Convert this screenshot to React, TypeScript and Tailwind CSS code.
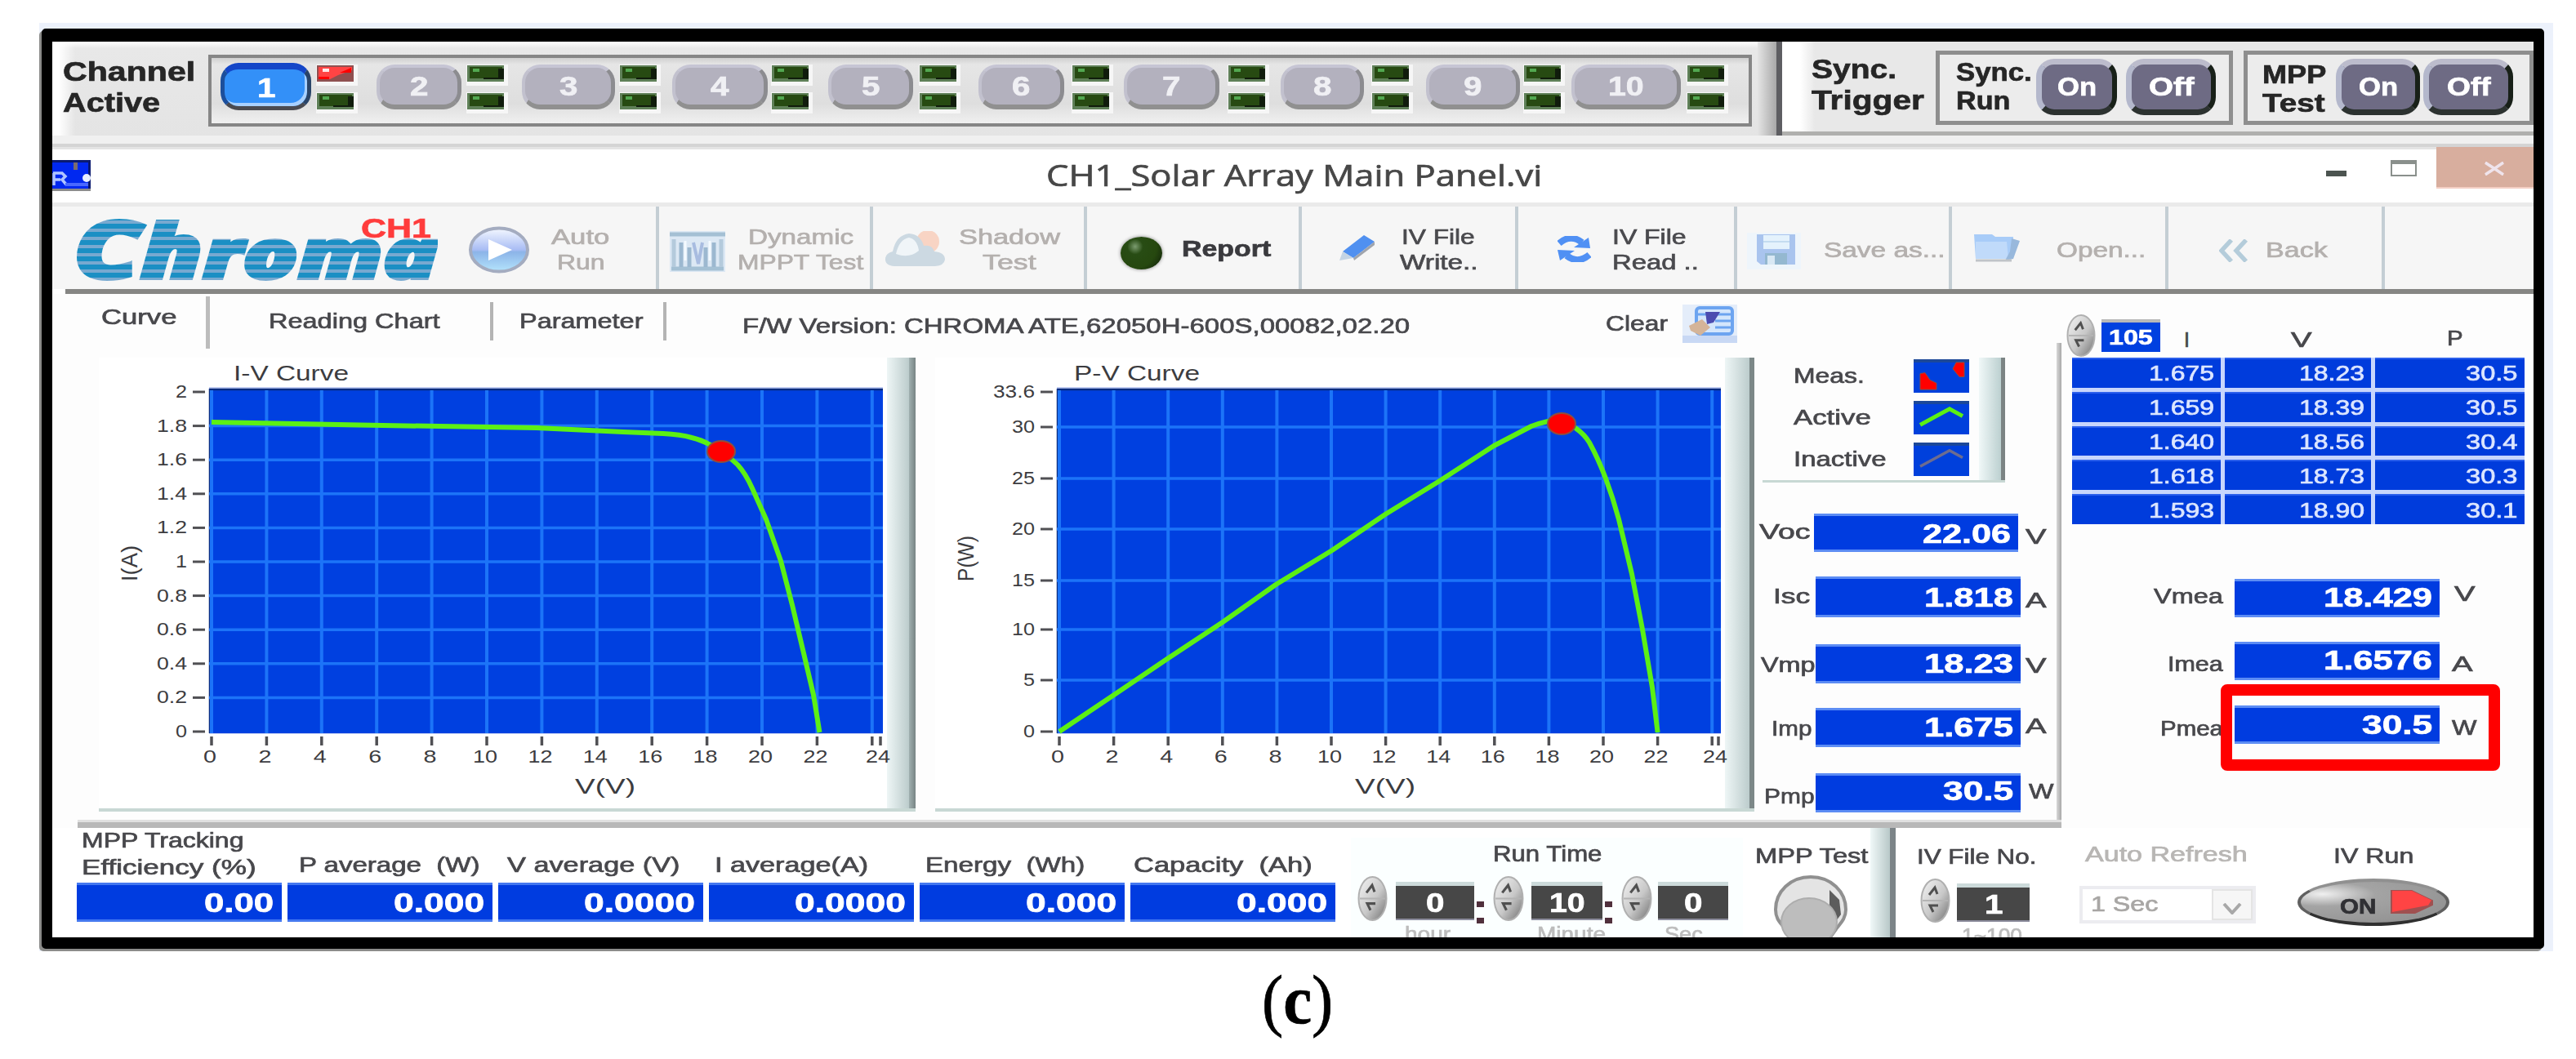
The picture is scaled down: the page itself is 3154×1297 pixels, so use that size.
import React, { useLayoutEffect, useRef, useState } from 'react'

type TextProps = {
  w: number,
  className?: string,
  children: React.ReactNode
}

// single line of text stretched to the given width
const T = ({ w, className = 'text-[26px]', children }: TextProps) => {
  const ref = useRef<HTMLSpanElement>(null)
  const [scale, setScale] = useState(1)
  useLayoutEffect(() => {
    if (ref.current) setScale(w / ref.current.offsetWidth)
  }, [w])
  return (
    <div className={`shrink-0 leading-none whitespace-pre ${className}`} style={{ width: w }}>
      <span ref={ref} className="inline-block origin-left" style={{ transform: `scaleX(${scale})` }}>{children}</span>
    </div>
  )
}

const channels = [
  { n: '1', btn: 'ml-[11px] w-[111px]', led: 'ml-[7px]' },
  { n: '2', btn: 'ml-[28px] w-[104px]', led: 'ml-[7px]' },
  { n: '3', btn: 'ml-[22px] w-[114px]', led: 'ml-[6px]' },
  { n: '4', btn: 'ml-[19px] w-[117px]', led: 'ml-[5px]' },
  { n: '5', btn: 'ml-[24px] w-[104px]', led: 'ml-[8px]' },
  { n: '6', btn: 'ml-[27px] w-[105px]', led: 'ml-[10px]' },
  { n: '7', btn: 'ml-[18px] w-[117px]', led: 'ml-[11px]' },
  { n: '8', btn: 'ml-[19px] w-[102px]', led: 'ml-[10px]' },
  { n: '9', btn: 'ml-[21px] w-[115px]', led: 'ml-[5px]' },
  { n: '10', btn: 'ml-[13px] w-[134px]', led: 'ml-[8px]' },
]

const Led = ({ on = false }: { on?: boolean }) => (
  <svg viewBox="0 0 45 20" preserveAspectRatio="none" className="w-[45px] h-[20px] shadow-[2px_2px_0_3px_#f6f6f6]">
    <rect width="45" height="20" fill={on ? '#8f5050' : '#5f8058'} />
    <path d={on ? 'M2 2H43V6L26 12L16 17H2Z' : 'M3 2H43V16H3Z'} fill={on ? '#ff4444' : '#274a12'} />
    {on ? <path d="M28 9L42 3V9ZM2 14H15V17H2Z" fill="#ff0000" /> : <path d="M45 4V17H20V15H38V4Z" fill="#101c0c" />}
    <rect x="7" y="4" width="8" height="4" fill={on ? '#ffe8e8' : '#52a850'} />
  </svg>
)

const Channel = ({ n, btn, led }: { n: string, btn: string, led: string }) => {
  const active = n === '1'
  return (
    <>
      <div className={`shrink-0 flex justify-center items-center rounded-[22px] font-bold ${btn} ${active
        ? 'mt-[6px] h-[58px] bg-[#3390f8] text-white border-[5px] border-t-[#1446c8] border-t-[8px] border-l-[#1c4f9c] border-r-[#2a4468] border-b-[#4a4a50] shadow-[inset_-3px_-4px_0_#a8d0ff]'
        : 'mt-[8px] h-[55px] bg-[#b3b1be] text-[#f0f0f4] border-t-4 border-l-4 border-r-[5px] border-b-[6px] border-t-[#c6c5d4] border-l-[#c2c1ce] border-r-[#8c8c90] border-b-[#909090]'}`}>
        <T w={n === '10' ? 44 : 22} className="text-[33px]">{n}</T>
      </div>
      <div className={`shrink-0 mt-[9px] flex flex-col gap-[14px] ${led}`}>
        <Led on={active} />
        <Led />
      </div>
    </>
  )
}

const PushButton = ({ label, w, className }: { label: string, w: number, className: string }) => (
  <div className={`shrink-0 mt-[5px] h-[69px] flex justify-center items-center rounded-[22px] bg-[#6e6b84] font-bold text-white border-t-[7px] border-l-[7px] border-r-[6px] border-b-[7px] border-t-[#bcbccc] border-l-[#b4b8cc] border-r-[#182018] border-b-[#2c3230] ${className}`}>
    <T w={w} className="text-[31px]">{label}</T>
  </div>
)

const TopBar = () => (
  <div className="flex h-[115px] items-start bg-[linear-gradient(#ffffff,#e8e8e8_8px,#e4e4e4)] text-[#262626] font-bold">
    <div className="pl-[13px] pt-[20px] w-[191px] h-[115px] shrink-0 flex flex-col gap-[5px] bg-[linear-gradient(90deg,#ffffff_8px,transparent_28px)]">
      <T w={162} className="text-[33px]">Channel</T>
      <T w={119} className="text-[33px]">Active</T>
    </div>
    <div className="mt-[16px] w-[1890px] h-[88px] shrink-0 flex items-start border-4 border-[#868686] bg-[linear-gradient(#d0d0d0,#e6e6e6_8px,#dedede_70%,#f0f0f0)]">
      {channels.map((c) => <Channel key={c.n} {...c} />)}
    </div>
    <div className="ml-[7px] w-[23px] h-[115px] shrink-0 bg-[linear-gradient(90deg,#e4e4e4,#a8a8a8)]" />
    <div className="w-[7px] h-[115px] shrink-0 bg-[#5e5e62]" />
    <div className="flex grow h-[115px] items-start border-b-[5px] border-[#b0b0ae] bg-[linear-gradient(90deg,#ffffff_22px,#e8e8e8_40px)]">
      <div className="ml-[36px] mt-[17px] w-[152px] shrink-0 flex flex-col gap-[5px]">
        <T w={104} className="text-[33px]">Sync.</T>
        <T w={138} className="text-[33px]">Trigger</T>
      </div>
      <div className="mt-[11px] w-[364px] h-[91px] shrink-0 flex items-start border-[5px] border-[#8e8e8e] bg-[#ececec]">
        <div className="ml-[20px] mt-[6px] w-[98px] shrink-0 flex flex-col gap-[4px]">
          <T w={93} className="text-[31px]">Sync.</T>
          <T w={66} className="text-[31px]">Run</T>
        </div>
        <PushButton label="On" w={48} className="w-[99px]" />
        <PushButton label="Off" w={56} className="ml-[11px] w-[110px]" />
      </div>
      <div className="ml-[13px] mt-[11px] w-[355px] h-[91px] shrink-0 flex items-start border-[5px] border-[#8e8e8e] bg-[#ececec]">
        <div className="ml-[18px] mt-[9px] w-[90px] shrink-0 flex flex-col gap-[4px]">
          <T w={78} className="text-[31px]">MPP</T>
          <T w={76} className="text-[31px]">Test</T>
        </div>
        <PushButton label="On" w={48} className="w-[103px]" />
        <PushButton label="Off" w={54} className="ml-[4px] w-[110px]" />
      </div>
    </div>
  </div>
)

const TitleBar = () => (
  <div className="flex h-[65px] items-start bg-white">
    <svg viewBox="0 0 47 38" preserveAspectRatio="none" className="mt-[13px] w-[47px] h-[38px] shrink-0">
      <rect width="47" height="38" fill="#0a1a70" />
      <rect y="3" width="44" height="32" fill="#0028f0" />
      <rect y="35" width="47" height="3" fill="#8c8c8c" />
      <path d="M1 16H12L16 20L12 24L18 31M1 24H10M2 16V31" stroke="#b0c4ff" strokeWidth="3.5" fill="none" />
      <rect x="26" y="3" width="5" height="9" fill="#7a6c70" />
      <circle cx="42" cy="22" r="5" fill="#e8f0ff" />
      <rect x="16" y="28" width="28" height="4" fill="#4a68ff" />
    </svg>
    <T w={607} className="ml-[1170px] mt-[14px] text-[36px] text-[#474747] font-['Open_Sans',sans-serif]">CH1_Solar Array Main Panel.vi</T>
    <div className="ml-[960px] mt-[26px] w-[25px] h-[7px] shrink-0 bg-[#4c5450]" />
    <div className="ml-[54px] mt-[13px] w-[32px] h-[20px] shrink-0 border-2 border-t-[5px] border-[#8a908c]" />
    <div className="ml-[24px] -mt-[3px] w-[119px] h-[51px] shrink-0 flex bg-[#d8ae9e] border-b-2 border-[#f4cfc4]">
      <svg viewBox="0 0 26 16" preserveAspectRatio="none" className="ml-[59px] mt-[18px] w-[24px] h-[17px]">
        <path d="M1 1L25 15M25 1L1 15" stroke="#efe4ec" strokeWidth="3.5" />
      </svg>
    </div>
  </div>
)

const Toolbar = () => (
  <div className="flex h-[101px] items-stretch bg-[#f6f6f6] text-[#b4b0ae] [&>div]:flex [&>div]:items-start [&>div]:shrink-0 [&>div]:border-[#c4ced4]">
    <div className="w-[743px] border-r-4">
      <div className="relative ml-[26px] mt-[1px]">
        <T w={446} className="text-[98px] font-extrabold italic font-['Open_Sans',sans-serif] [-webkit-text-stroke:4px_transparent] [&>span]:bg-[repeating-linear-gradient(#1b8fc4_0_6px,#78a9d0_6px_10px)] [&>span]:bg-clip-text text-transparent">C<span className="text-[92px]">h</span><span className="text-[84px]">roma</span></T>
        <div className="absolute left-[352px] top-[8px]">
          <T w={86} className="text-[34px] font-bold text-[#ff3c3c]">CH1</T>
        </div>
      </div>
      <svg viewBox="0 0 76 58" preserveAspectRatio="none" className="ml-[37px] mt-[24px] w-[76px] h-[58px] shrink-0">
        <defs>
          <linearGradient id="play" x1="0" y1="0" x2="0" y2="1">
            <stop offset="0" stopColor="#f4f8ff" />
            <stop offset=".5" stopColor="#a8bcf4" />
            <stop offset=".55" stopColor="#8cb4e8" />
            <stop offset="1" stopColor="#b4e4fc" />
          </linearGradient>
        </defs>
        <ellipse cx="38" cy="29" rx="35" ry="26.5" fill="url(#play)" stroke="#a4acc0" strokeWidth="4" />
        <path d="M25 16L54 29L25 42Z" fill="#fff" />
      </svg>
      <div className="ml-[26px] mt-[24px] flex flex-col items-center gap-[5px]">
        <T w={72}>Auto</T>
        <T w={59}>Run</T>
      </div>
    </div>
    <div className="w-[262px] border-r-4">
      <svg viewBox="0 0 68 50" preserveAspectRatio="none" className="ml-[13px] mt-[30px] w-[68px] h-[50px] shrink-0">
        <rect width="68" height="50" fill="#dce8f4" />
        <path d="M0 4H68M2 46H66" stroke="#a4c0d4" strokeWidth="5" />
        <path d="M5 10V44M63 10V44" stroke="#b4cadc" strokeWidth="5" />
        <path d="M14 44V14M24 44V20M44 44V20M54 44V14" stroke="#9cb8d0" strokeWidth="5" />
        <path d="M29 14L35 40L40 14" stroke="#a8bce0" strokeWidth="4" fill="none" />
        <path d="M19 12V36M49 12V36" stroke="#f4faff" strokeWidth="3" />
      </svg>
      <div className="ml-[15px] mt-[24px] flex flex-col items-center gap-[5px]">
        <T w={129}>Dynamic</T>
        <T w={154}>MPPT Test</T>
      </div>
    </div>
    <div className="w-[262px] border-r-4">
      <svg viewBox="0 0 75 44" preserveAspectRatio="none" className="ml-[14px] mt-[30px] w-[75px] h-[44px] shrink-0">
        <circle cx="53" cy="13" r="14" fill="#f8d4c4" />
        <path d="M12 43Q0 42 1 33Q2 27 10 25Q14 5 30 3Q44 4 48 18Q58 16 61 25Q74 26 74 35Q73 42 62 43Z" fill="#ccd9e2" />
        <path d="M14 28Q18 10 30 8Q40 10 42 24Q30 34 14 28Z" fill="#f0f5f8" />
      </svg>
      <div className="ml-[16px] mt-[24px] flex flex-col items-center gap-[5px]">
        <T w={124}>Shadow</T>
        <T w={66}>Test</T>
      </div>
    </div>
    <div className="w-[263px] border-r-4">
      <div className="ml-[41px] mt-[37px] w-[51px] h-[40px] shrink-0 rounded-[50%] bg-[radial-gradient(circle_at_35%_30%,#7c9c70,#284c14_22%,#26480f_60%,#0e1c0a)] shadow-[0_0_4px_#808080]" />
      <T w={109} className="ml-[24px] mt-[38px] text-[28px] font-bold text-[#3a3a3e]">Report</T>
    </div>
    <div className="w-[265px] border-r-4">
      <svg viewBox="0 0 43 33" preserveAspectRatio="none" className="ml-[46px] mt-[34px] w-[43px] h-[33px] shrink-0">
        <path d="M4 21L30 1L43 9L17 29Z" fill="#5090f0" />
        <path d="M17 29L43 9V13L18 32Z" fill="#a0a4ac" />
        <path d="M4 21L17 29L0 32Z" fill="#c4d4e4" />
      </svg>
      <div className="ml-[31px] mt-[24px] flex flex-col gap-[5px] text-[#4a4a4e]">
        <T w={90} className="ml-[2px] text-[26px]">IV File</T>
        <T w={96}>Write..</T>
      </div>
    </div>
    <div className="w-[268px] border-r-4">
      <svg viewBox="0 0 41 32" preserveAspectRatio="none" className="ml-[48px] mt-[36px] w-[41px] h-[32px] shrink-0">
        <path d="M2 9Q16 -3 30 8" stroke="#5090f4" strokeWidth="8" fill="none" />
        <path d="M20 14L40 15L38 2Z" fill="#5090f4" />
        <path d="M39 23Q25 35 11 24" stroke="#5090f4" strokeWidth="8" fill="none" />
        <path d="M21 18L0 17L3 30Z" fill="#5090f4" />
      </svg>
      <div className="ml-[26px] mt-[24px] flex flex-col gap-[5px] text-[#4a4a4e]">
        <T w={91}>IV File</T>
        <T w={106}>Read ..</T>
      </div>
    </div>
    <div className="w-[263px] border-r-4">
      <svg viewBox="0 0 66 45" preserveAspectRatio="none" className="ml-[12px] mt-[32px] w-[66px] h-[45px] shrink-0">
        <rect width="66" height="45" fill="#eef5fb" />
        <path d="M12 2H59V39H17L12 35Z" fill="#a9c4ee" />
        <rect x="20" y="3" width="32" height="17" fill="#e4f2fc" />
        <path d="M20 11H52" stroke="#c4dcf0" strokeWidth="2" />
        <rect x="22" y="25" width="27" height="14" fill="#94b8d0" />
        <rect x="25" y="28" width="9" height="11" fill="#d8e8f4" />
      </svg>
      <T w={149} className="ml-[28px] mt-[40px] text-[26px]">Save as...</T>
    </div>
    <div className="w-[265px] border-r-4">
      <svg viewBox="0 0 57 35" preserveAspectRatio="none" className="ml-[27px] mt-[33px] w-[57px] h-[35px] shrink-0">
        <path d="M0 1H22L26 4H48L46 31H2Z" fill="#a8ccf8" />
        <path d="M2 10H40L42 31H2Z" fill="#c0dafa" />
        <path d="M46 6L56 9L48 31L38 33L44 22Z" fill="#98b8dc" />
        <path d="M2 33H46" stroke="#c0c4c8" strokeWidth="3" />
      </svg>
      <T w={109} className="ml-[44px] mt-[40px] text-[26px]">Open...</T>
    </div>
    <div className="w-[265px] border-r-4">
      <svg viewBox="0 0 36 28" preserveAspectRatio="none" className="ml-[62px] mt-[40px] w-[36px] h-[28px] shrink-0">
        <path d="M15 1L3 14L15 27M33 1L21 14L33 27" stroke="#b4ccda" strokeWidth="5.5" fill="none" />
      </svg>
      <T w={76} className="ml-[21px] mt-[40px] text-[26px]">Back</T>
    </div>
  </div>
)

type ChartProps = {
  w: number, // drawing width
  left: number,
  right: number,
  zero: number,
  step: number,
  lastX: number,
  title: string,
  titleX: number,
  titleW: number,
  axis: string,
  axisX: number,
  unitX: number,
  ticks: [string, number][],
  curve: string,
  dot: [number, number]
}

const Chart = ({ w, left, right, zero, step, lastX, title, titleX, titleW, axis, axisX, unitX, ticks, curve, dot }: ChartProps) => {
  const xs = Array.from({ length: 13 }, (_, i) => zero + i * step)
  return (
    <svg viewBox={`0 0 ${w} 552`} width={w} height={552} className="relative block shrink-0 overflow-visible" fill="#3c3c40">
      <text x={titleX} y={28} fontSize={25} textLength={titleW} lengthAdjust="spacingAndGlyphs">{title}</text>
      <rect x={left} y={36} width={right - left} height={425} fill="#c4d0f4" />
      <rect x={left} y={38} width={right - left} height={422} fill="#0040e0" />
      <path d={`M${left} 39H${right}M${left + 1} 38V460`} stroke="#0a2c80" strokeWidth="2.5" />
      {xs.map((x) => <path key={x} d={`M${x} 40V460`} stroke="#1c74f8" strokeWidth="4" />)}
      {ticks.slice(1, -1).map(([t, y]) => <path key={t} d={`M${left} ${y}H${right}`} stroke="#1c74f8" strokeWidth="3.5" />)}
      {ticks.map(([t, y]) => (
        <g key={t}>
          <path d={`M${left - 20} ${y}h15`} stroke="#505054" strokeWidth="3" />
          <text x={left - 27 - t.length * 14 + (t.includes('.') ? 5 : 0)} y={y + 7} fontSize={22}
            textLength={t.length * 14 - (t.includes('.') ? 5 : 0)} lengthAdjust="spacingAndGlyphs">{t}</text>
        </g>
      ))}
      {[...xs, right - 3].map((x) => <path key={x} d={`M${x} 464v11`} stroke="#505054" strokeWidth="3.5" />)}
      {xs.map((x, i) => {
        const len = i < 5 ? 16 : 30
        return (
          <text key={x} x={(i === 12 ? lastX : x - 2) - len / 2} y={496} fontSize={22}
            textLength={len} lengthAdjust="spacingAndGlyphs">{i * 2}</text>
        )
      })}
      <text x={unitX} y={534} fontSize={25} textLength={74} lengthAdjust="spacingAndGlyphs">V(V)</text>
      <text transform={`translate(${axisX} 274) rotate(-90)`} fontSize={27} textLength={axis === 'I(A)' ? 44 : 56} lengthAdjust="spacingAndGlyphs">{axis}</text>
      <path d={curve} fill="none" stroke="#5cf014" strokeWidth="6" strokeLinejoin="round" />
      <ellipse cx={dot[0]} cy={dot[1]} rx="17" ry="13" fill="#ff0000" stroke="#8c5040" strokeWidth="2" />
    </svg>
  )
}

const ivTicks: [string, number][] = ['2', '1.8', '1.6', '1.4', '1.2', '1', '0.8', '0.6', '0.4', '0.2', '0'].map((t, i) => [t, 42 + i * 41.6])
const pvTicks: [string, number][] = [['33.6', 42], ['30', 85], ['25', 148], ['20', 210], ['15', 273], ['10', 333], ['5', 395], ['0', 458]]

const legend = [
  { name: 'Meas.', w: 87, icon: <path d="M8 18L14 17L20 26L28 30V38H8ZM52 4H62V22H56L48 12Z" fill="#ff0000" stroke="#8c5040" /> },
  { name: 'Active', w: 95, icon: <path d="M8 30L44 10L60 19" stroke="#5cf014" strokeWidth="5" fill="none" /> },
  { name: 'Inactive', w: 114, icon: <path d="M8 30L44 10L60 19" stroke="#6c6c90" strokeWidth="3.5" fill="none" /> },
]

const params = [
  { name: 'Voc', w: 62, value: '22.06', vw: 108, unit: 'V', row: 'mt-[38px]', label: 'ml-[6px] mt-[9px]', box: 'ml-[5px] w-[250px] h-[47px] pt-[7px]', u: 'ml-[9px] mt-[15px]' },
  { name: 'Isc', w: 45, value: '1.818', vw: 109, unit: 'A', row: 'mt-[30px]', label: 'ml-[23px] mt-[11px]', box: 'ml-[7px] w-[251px] h-[50px] pt-[8px]', u: 'ml-[6px] mt-[16px]' },
  { name: 'Vmp', w: 66, value: '18.23', vw: 109, unit: 'V', row: 'mt-[33px]', label: 'ml-[8px] mt-[12px]', box: 'ml-[1px] w-[251px] h-[48px] pt-[6px]', u: 'ml-[6px] mt-[13px]' },
  { name: 'Imp', w: 49, value: '1.675', vw: 109, unit: 'A', row: 'mt-[30px]', label: 'ml-[21px] mt-[12px]', box: 'ml-[5px] w-[251px] h-[48px] pt-[6px]', u: 'ml-[6px] mt-[9px]' },
  { name: 'Pmp', w: 61, value: '30.5', vw: 86, unit: 'W', row: 'mt-[32px]', label: 'ml-[12px] mt-[15px]', box: 'ml-[2px] w-[251px] h-[48px] pt-[4px]', u: 'ml-[10px] mt-[9px]' },
]

const measured = [
  { name: 'Vmea', w: 85, value: '18.429', vw: 133, unit: 'V', row: 'mt-[67px]', label: 'ml-[113px] mt-[8px]', box: 'w-[251px] h-[47px] ml-[14px] pt-[5px]', u: 'ml-[18px] mt-[5px]' },
  { name: 'Imea', w: 68, value: '1.6576', vw: 133, unit: 'A', row: 'mt-[30px]', label: 'ml-[130px] mt-[14px]', box: 'w-[251px] h-[47px] ml-[14px] pt-[5px]', u: 'ml-[15px] mt-[14px]' },
  { name: 'Pmea', w: 77, value: '30.5', vw: 86, unit: 'W', row: 'mt-[31px]', label: 'ml-[121px] mt-[15px]', box: 'w-[251px] h-[47px] ml-[14px] pt-[6px]', u: 'ml-[15px] mt-[14px]' },
]

const Readout = ({ name, w, value, vw, unit, row, label, box, u }: typeof params[0]) => (
  <div className={`relative flex items-start ${row}`}>
    <T w={w} className={`text-[26px] ${label}`}>{name}</T>
    <div className={`shrink-0 flex justify-end pr-[9px] bg-[#003ce0] border-[#5c8cf4] border-y-[3px] ${box}`}>
      <T w={vw} className="-mt-[3px] text-[34px] font-bold text-white">{value}</T>
    </div>
    <T w={unit === 'W' ? 31 : 25} className={`text-[26px] ${u}`}>{unit}</T>
    {name === 'Pmea' && <div className="absolute left-[195px] -top-[26px] w-[342px] h-[106px] border-[14px] border-[#ff0000] rounded-[8px]" />}
  </div>
)

const Spinner = ({ className }: { className: string }) => (
  <svg viewBox="0 0 37 54" preserveAspectRatio="none" className={`shrink-0 ${className}`}>
    <defs>
      <linearGradient id="spin" x1="0" y1="0" x2="1" y2="1">
        <stop offset="0" stopColor="#f4f4f4" />
        <stop offset=".55" stopColor="#c8c8c8" />
        <stop offset="1" stopColor="#707070" />
      </linearGradient>
    </defs>
    <ellipse cx="18.5" cy="27" rx="17" ry="26" fill="url(#spin)" stroke="#b0b0b0" strokeWidth="2" />
    <path d="M3 27H34" stroke="#b4b4b4" strokeWidth="2" />
    <path d="M11 20L18 11L21 19M22 33H12L16 41" stroke="#505050" strokeWidth="3" fill="none" />
  </svg>
)

const rows = [
  ['1.675', '18.23', '30.5'],
  ['1.659', '18.39', '30.5'],
  ['1.640', '18.56', '30.4'],
  ['1.618', '18.73', '30.3'],
  ['1.593', '18.90', '30.1'],
]

const MainArea = () => (
  <div className="flex h-[654px] items-start bg-[#fdfdfd]">
    <div className="w-[2460px] shrink-0">
      <div className="flex items-start h-[644px]">
        <div className="w-[2454px] shrink-0">
          <div className="flex items-start h-[78px]">
            <T w={92} className="ml-[60px] mt-[15px] text-[26px]">Curve</T>
            <div className="ml-[36px] mt-[3px] w-[5px] h-[64px] bg-[#bcbcbc]" />
            <T w={210} className="ml-[72px] mt-[20px] text-[26px]">Reading Chart</T>
            <div className="ml-[61px] mt-[10px] w-[4px] h-[47px] bg-[#b4b4b4]" />
            <T w={151} className="ml-[32px] mt-[20px] text-[26px]">Parameter</T>
            <div className="ml-[25px] mt-[10px] w-[4px] h-[47px] bg-[#b4b4b4]" />
            <T w={817} className="ml-[93px] mt-[26px] text-[26px]">F/W Version: CHROMA ATE,62050H-600S,00082,02.20</T>
            <T w={76} className="ml-[240px] mt-[23px] text-[26px]">Clear</T>
            <svg viewBox="0 0 67 47" preserveAspectRatio="none" className="ml-[18px] mt-[13px] w-[67px] h-[47px] shrink-0">
              <rect width="67" height="47" fill="#e4edfa" />
              <rect y="38" width="67" height="9" fill="#c8d8f4" />
              <rect x="17" y="4" width="44" height="32" rx="4" fill="#d4e6fc" stroke="#6ca4f0" strokeWidth="4" />
              <path d="M19 12H59M40 20H59M40 28H59" stroke="#6ca4f0" strokeWidth="3" />
              <path d="M28 9H46L38 22L30 24Z" fill="#4c4cb0" />
              <path d="M8 26L24 18L34 28L22 38L10 32Z" fill="#d4b498" />
            </svg>
          </div>
          <div className="flex items-start h-[556px]">
            <div className="ml-[57px] w-[1000px] h-[556px] shrink-0 flex items-stretch border-b-4 border-[#c8d8d4] bg-white">
              <Chart w={965} left={135} right={960} zero={138} step={67.4} lastX={954} title="I-V Curve" titleX={165} titleW={141}
                axis="I(A)" axisX={47} unitX={583} ticks={ivTicks}
                curve="M138 79L319 82.5L536 86L642 91L691 93Q712 94 726 98Q738 101 747 106Q757 111 765 118Q775 124 782 131Q792 142 800 160L817 198L835 249L849 303L863 362L875 413L882.5 459"
                dot={[762, 115]} />
              <div className="w-[27px] bg-[linear-gradient(90deg,#eef6f6,#bccccc)]" />
              <div className="w-[8px] bg-[linear-gradient(90deg,#a0b0b0,#788484)]" />
            </div>
            <div className="ml-[24px] w-[1003px] h-[556px] shrink-0 flex items-stretch border-b-4 border-[#c8d8d4] bg-white">
              <Chart w={967} left={149} right={962} zero={152} step={66.6} lastX={955} title="P-V Curve" titleX={170} titleW={154}
                axis="P(W)" axisX={47} unitX={514} ticks={pvTicks}
                curve="M152 458L219 413L284 369L352 324L417 278L486 236L551 192L616 152L684 108L730 84Q748 77 767 76Q778 80 785 87Q795 94 801 104Q812 124 821 148Q830 172 837 198L853 265L866 333L878 404L884.6 459"
                dot={[767, 81]} />
              <div className="w-[30px] bg-[linear-gradient(90deg,#eef6f6,#bccccc)]" />
              <div className="w-[6px] bg-[#7c8888]" />
            </div>
            <div className="w-[370px] shrink-0 text-[#48484c]">
              <div className="ml-[10px] w-[297px] h-[153px] flex border-b-[3px] border-[#c8d8d4]">
                <div className="w-[265px] shrink-0 flex flex-col gap-[10px] pt-[2px] pl-[38px]">
                  {legend.map((l) => (
                    <div key={l.name} className="flex items-start">
                      <div className="w-[147px] pt-[7px]"><T w={l.w}>{l.name}</T></div>
                      <svg viewBox="0 0 68 42" preserveAspectRatio="none" className="w-[68px] h-[41px]">
                        <rect width="68" height="42" fill="#0040dc" />
                        <rect width="68" height="4" fill="#1c4898" />
                        {l.icon}
                      </svg>
                    </div>
                  ))}
                </div>
                <div className="w-[27px] bg-[linear-gradient(90deg,#f0f8f8,#bcd0d0)]" />
                <div className="w-[5px] bg-[#7c8484]" />
              </div>
              {params.map((p) => <Readout key={p.name} {...p} />)}
            </div>
          </div>
        </div>
        <div className="mt-[60px] w-[6px] h-[584px] bg-[linear-gradient(90deg,#d8d8d8,#a8a8a8)]" />
      </div>
      <div className="ml-[31px] h-[10px] bg-[#b8b8b8] border-t-[3px] border-[#e0e0e0]" />
    </div>
    <div className="grow text-[#48484c]">
      <div className="flex items-start h-[78px]">
        <Spinner className="ml-[6px] mt-[25px] w-[36px] h-[52px]" />
        <div className="ml-[7px] mt-[31px] w-[72px] h-[40px] shrink-0 flex justify-center items-center bg-[#0040e0] border-t-4 border-[#b8b8b8]">
          <T w={54} className="text-[25px] font-bold text-white">105</T>
        </div>
        <T w={7} className="ml-[29px] mt-[44px] text-[25px]">I</T>
        <T w={26} className="ml-[124px] mt-[44px] text-[25px]">V</T>
        <T w={20} className="ml-[165px] mt-[42px] text-[25px]">P</T>
      </div>
      <div className="ml-[13px] w-[554px] h-[204px] grid grid-cols-[182px_179px_183px] gap-x-[5px] gap-y-[5px] bg-[#c8d6fc]">
        {rows.flat().map((v, i) => (
          <div key={i} className="flex justify-end items-center pr-[8px] bg-[#003cdc] border-t-2 border-[#2c60ec]">
            <T w={v.length === 4 ? 64 : 80} className="text-[26px] text-[#dce6ff]">{v}</T>
          </div>
        ))}
      </div>
      {measured.map((m) => <Readout key={m.name} {...m} />)}
    </div>
  </div>
)

const metrics = [
  { name: 'P average  (W)', w: 221, value: '0.000', vw: 111, ml: 'pl-[14px]' },
  { name: 'V average (V)', w: 211, value: '0.0000', vw: 136, ml: 'pl-[11px]' },
  { name: 'I average(A)', w: 188, value: '0.0000', vw: 136, ml: 'pl-[7px]' },
  { name: 'Energy  (Wh)', w: 195, value: '0.000', vw: 111, ml: 'pl-[7px]' },
  { name: 'Capacity  (Ah)', w: 219, value: '0.000', vw: 111, ml: 'pl-[4px]' },
]

const MetricBox = ({ w, value }: { w: number, value: string }) => (
  <div className="h-[48px] flex justify-end pt-[4px] pr-[10px] bg-[#003ce0] border-y-[3px] border-[#4478f0]">
    <T w={w} className="text-[34px] font-bold text-white">{value}</T>
  </div>
)

const DarkBox = ({ value, className }: { value: string, className: string }) => (
  <div className={`mt-[7px] h-[47px] shrink-0 flex justify-center items-center bg-[#474747] border-t-[5px] border-b-2 border-t-[#ccdada] border-b-[#8c8c9c] ${className}`}>
    <T w={value.length * 22} className="text-[33px] font-bold text-white">{value}</T>
  </div>
)

const Colon = () => (
  <div className="mt-[31px] w-[23px] shrink-0 flex flex-col gap-[13px] pl-[3px]">
    <div className="w-[9px] h-[7px] bg-[#50303c]" />
    <div className="w-[9px] h-[7px] bg-[#50303c]" />
  </div>
)

const BottomBar = () => (
  <div className="flex h-[134px] items-start bg-white overflow-hidden text-[#48484c]">
    <div className="ml-[30px] shrink-0 flex gap-[7px]">
      <div className="w-[251px]">
        <div className="h-[67px] pl-[6px] pt-[2px] flex flex-col gap-[7px]">
          <T w={198}>MPP Tracking</T>
          <T w={213}>Efficiency (%)</T>
        </div>
        <MetricBox w={85} value="0.00" />
      </div>
      {metrics.map((m) => (
        <div key={m.name} className="w-[251px]">
          <div className={`h-[67px] pt-[32px] ${m.ml}`}><T w={m.w}>{m.name}</T></div>
          <MetricBox w={m.vw} value={m.value} />
        </div>
      ))}
    </div>
    <div className="ml-[19px] mt-[12px] w-[480px] h-[122px] shrink-0 bg-[#fbffff]">
      <T w={134} className="ml-[174px] pt-[7px] text-[27px]">Run Time</T>
      <div className="mt-[13px] flex items-start h-[55px]">
        <Spinner className="ml-[8px] w-[37px] h-[55px]" />
        <DarkBox value="0" className="ml-[10px] w-[96px]" />
        <Colon />
        <Spinner className="w-[38px] h-[55px]" />
        <DarkBox value="10" className="ml-[9px] w-[87px]" />
        <Colon />
        <Spinner className="w-[38px] h-[55px]" />
        <DarkBox value="0" className="ml-[7px] w-[86px]" />
      </div>
      <div className="mt-[3px] flex text-[#bcbcbc]">
        <T w={56} className="ml-[66px] text-[26px]">hour</T>
        <T w={84} className="ml-[106px] text-[26px]">Minute</T>
        <T w={47} className="ml-[72px] text-[26px]">Sec</T>
      </div>
    </div>
    <div className="ml-[15px] mt-[21px] w-[138px] shrink-0">
      <T w={138}>MPP Test</T>
      <svg viewBox="0 0 90 83" preserveAspectRatio="none" className="ml-[23px] mt-[11px] w-[90px] h-[83px]">
        <path d="M45 2C70 2 88 20 88 42C88 54 80 60 76 66L64 83H26L14 66C8 58 2 54 2 42C2 20 20 2 45 2Z" fill="#e4e4e4" stroke="#909090" strokeWidth="4" />
        <path d="M68 18L80 30L82 48L76 56L68 40Z" fill="#5c5c5c" />
        <ellipse cx="43" cy="57" rx="34" ry="29" fill="#bdbdbd" stroke="#adadad" strokeWidth="2" />
      </svg>
    </div>
    <div className="ml-[3px] w-[24px] h-[134px] shrink-0 bg-[linear-gradient(90deg,#f0f8f8,#b8c8c8)]" />
    <div className="w-[7px] h-[134px] shrink-0 bg-[#7c8488]" />
    <div className="ml-[26px] mt-[22px] w-[146px] shrink-0">
      <T w={146}>IV File No.</T>
      <div className="ml-[4px] mt-[14px] flex items-start">
        <Spinner className="w-[37px] h-[54px]" />
        <div className="-mt-[1px]"><DarkBox value="1" className="ml-[8px] w-[89px]" /></div>
      </div>
      <T w={74} className="ml-[55px] mt-[3px] text-[26px] text-[#bcbcbc]">1~100</T>
    </div>
    <div className="ml-[53px] mt-[19px] w-[216px] shrink-0 text-[#b8b6b4]">
      <T w={199} className="ml-[7px] text-[26px]">Auto Refresh</T>
      <div className="mt-[26px] h-[46px] flex justify-between items-start border-4 border-[#ececf0] bg-white">
        <T w={83} className="ml-[10px] mt-[5px] text-[26px] text-[#a8a6a4]">1 Sec</T>
        <div className="w-[50px] h-[38px] flex justify-center items-center border-2 border-[#e4e4e4] bg-[#f6f6f6]">
          <svg viewBox="0 0 24 14" className="mt-[10px] w-[24px] h-[14px]">
            <path d="M2 1L12 12L22 1" stroke="#a8a8a8" strokeWidth="4" fill="none" />
          </svg>
        </div>
      </div>
    </div>
    <div className="ml-[51px] mt-[21px] w-[186px] shrink-0">
      <T w={99} className="ml-[44px] text-[26px]">IV Run</T>
      <div className="mt-[15px] h-[58px] flex items-start rounded-[50%] border-[4px] border-[#606060] border-t-[#909090] border-b-[#303030] bg-[radial-gradient(ellipse_at_15%_30%,#f0f0f0,#a4a4a4_30%,#8c8c8c)]">
        <T w={45} className="ml-[48px] mt-[18px] text-[25px] text-[#303034] font-bold">ON</T>
        <svg viewBox="0 0 52 28" preserveAspectRatio="none" className="ml-[17px] mt-[10px] w-[52px] h-[29px]">
          <path d="M0 0H26L52 12V18L30 28H0Z" fill="#a05050" />
          <path d="M2 1H26L50 12L46 18L2 26Z" fill="#ff4444" />
        </svg>
      </div>
    </div>
  </div>
)

const App = () => (
  <div className="w-[3154px] h-[1297px] bg-white overflow-hidden text-[#48484c] font-['Liberation_Sans',Arial,sans-serif] [-webkit-text-stroke-width:0.7px]">
    <div className="h-[28px]" />
    <div className="ml-[48px] w-[3078px] h-[1137px] pt-[7px] pl-[3px] bg-[#ecf1fb] overflow-hidden">
      <div className="w-[3064px] h-[1127px] border-x-[13px] border-t-[16px] border-b-[14px] border-black rounded-[5px] bg-white overflow-hidden shadow-[-3px_3px_0_#8c8c8a]">
        <TopBar />
        <div className="h-[17px] bg-[linear-gradient(#f0f0f0_10px,#d4d4d4_10px_14px,#e4e4e4_14px)]" />
        <TitleBar />
        <div className="h-[5px] bg-[#eaeaea]" />
        <Toolbar />
        <div className="ml-[16px] h-[6px] bg-[#868684]" />
        <MainArea />
        <BottomBar />
      </div>
    </div>
    <div className="ml-[1545px] mt-[18px]">
      <T w={87} className="text-[84px] text-black font-['Liberation_Serif',serif]">(<b>c</b>)</T>
    </div>
  </div>
)

export default App
